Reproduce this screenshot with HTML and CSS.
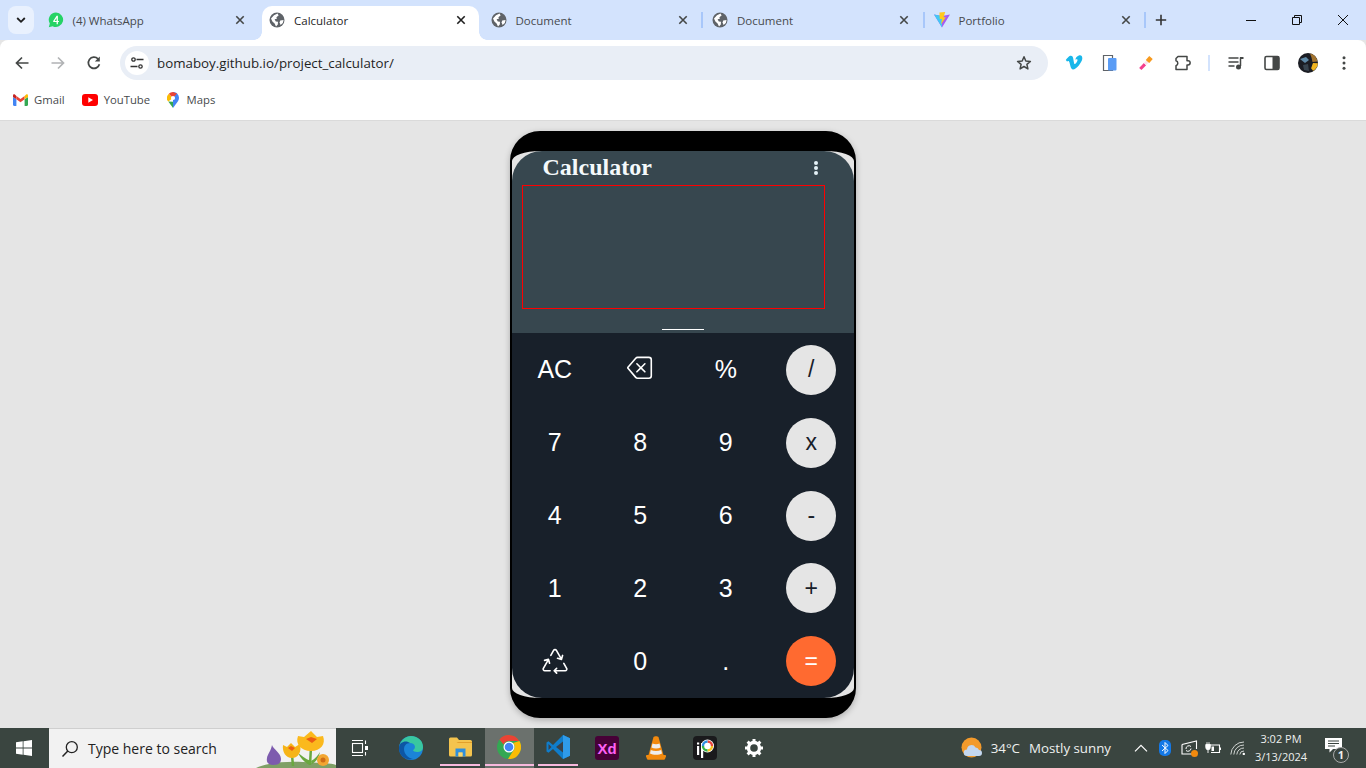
FILE: index.html
```html
<!DOCTYPE html>
<html lang="en">
<head>
  <meta charset="UTF-8" />
  <title>Calculator</title>
  <link rel="stylesheet" href="styles.css">
</head>
<body>
  <svg class="defs" width="0" height="0">
    <defs>
      <symbol id="globe" viewBox="0 0 16 16">
        <circle cx="8" cy="8" r="7.5" fill="#5f6368"/>
        <path d="M2 6.5 5 3.2 8.6 1.6 9.6 3.4 7.4 5.2 7.9 6.8 5.6 7.2 6.8 9.4 9 9.8 8.8 12.4 7 14.4 5.6 11.6 3.4 9.6Z" fill="#fff"/>
        <path d="M11.2 8.4 14.6 8 13.8 11 11.6 13 10.6 10.6Z" fill="#fff"/>
      </symbol>
      <symbol id="cross" viewBox="0 0 16 16">
        <path d="M4.300 4.300 11.700 11.700M11.700 4.300 4.300 11.700" fill="none" stroke="currentColor" stroke-width="1.600"/>
      </symbol>
    </defs>
  </svg>

  <header class="tabstrip">
    <div class="tab-toggle">
      <svg width="12" height="12" viewBox="0 0 12 12"><path d="M2.2 4 6 7.8 9.8 4" fill="none" stroke="#1f1f1f" stroke-width="1.8"/></svg>
    </div>
    <div class="tab">
      <svg class="favicon" viewBox="0 0 16 16"><path d="M8 .6a7.2 7.2 0 0 0-6.2 10.9L.8 15.2l3.8-1A7.2 7.2 0 1 0 8 .6Z" fill="#25d366"/><path d="M8.6 3.8 5.2 9v1h3.4v2.2h1.3V10h1V8.9h-1V3.8Zm0 2.2v2.9H6.7Z" fill="#fff"/></svg>
      <span class="tab-title">(4) WhatsApp</span>
      <svg class="tab-close"><use href="#cross"/></svg>
      <span class="tab-sep tab-sep-off"></span>
    </div>
    <div class="tab tab-active">
      <svg class="favicon"><use href="#globe"/></svg>
      <span class="tab-title">Calculator</span>
      <svg class="tab-close"><use href="#cross"/></svg>
      <span class="tab-sep tab-sep-off"></span>
    </div>
    <div class="tab">
      <svg class="favicon"><use href="#globe"/></svg>
      <span class="tab-title">Document</span>
      <svg class="tab-close"><use href="#cross"/></svg>
      <span class="tab-sep"></span>
    </div>
    <div class="tab">
      <svg class="favicon"><use href="#globe"/></svg>
      <span class="tab-title">Document</span>
      <svg class="tab-close"><use href="#cross"/></svg>
      <span class="tab-sep"></span>
    </div>
    <div class="tab">
      <svg class="favicon" viewBox="0 0 16 16"><path d="M0 2.400 8 4l8-1.600L8 15.600Z" fill="#a55cf2"/><path d="M0 2.400 8 4v11.600Z" fill="#41c8f5"/><path d="M5.400 .6 11.200 0 9.600 5.200h2.200L7 12.400 8 7H5.800Z" fill="#ffc81f"/></svg>
      <span class="tab-title">Portfolio</span>
      <svg class="tab-close"><use href="#cross"/></svg>
      <span class="tab-sep"></span>
    </div>
    <svg class="new-tab" width="12" height="12" viewBox="0 0 12 12"><path d="M6 .8v10.4M.8 6h10.4" stroke="#333" stroke-width="1.6"/></svg>
    <div class="win-controls">
      <svg width="12" height="12" viewBox="0 0 12 12"><path d="M1 6.5h10" stroke="#111" stroke-width="1"/></svg>
      <svg width="12" height="12" viewBox="0 0 12 12"><path d="M1.500 3.500h7v7h-7ZM3.500 3.500V1.500h7v7H8.500" fill="none" stroke="#111" stroke-width="1"/></svg>
      <svg width="12" height="12" viewBox="0 0 12 12"><path d="M1 1 11 11M11 1 1 11" stroke="#111" stroke-width="1"/></svg>
    </div>
  </header>

  <nav class="toolbar">
    <div class="nav-btns">
      <svg width="16" height="16" viewBox="0 0 16 16"><path d="M14.500 8H2.500M8 2.500 2.500 8 8 13.500" fill="none" stroke="#444746" stroke-width="1.700"/></svg>
      <svg width="16" height="16" viewBox="0 0 16 16"><path d="M1.500 8h12M8 2.500 13.500 8 8 13.500" fill="none" stroke="#b1b3b5" stroke-width="1.700"/></svg>
      <svg width="16" height="16" viewBox="0 0 16 16"><path d="M13.400 9.200A5.600 5.600 0 1 1 12 3.900" fill="none" stroke="#444746" stroke-width="1.700"/><path d="M13.800 1.400v5h-5Z" fill="#444746"/></svg>
    </div>
    <div class="omnibox">
      <span class="site-chip">
        <svg width="14" height="14" viewBox="0 0 14 14"><g fill="none" stroke="#333" stroke-width="1.300"><circle cx="3.500" cy="3.500" r="1.700"/><circle cx="10.500" cy="10.500" r="1.700"/><path d="M6.500 3.500h7M.5 10.500h7"/></g></svg>
      </span>
      <span class="url">bomaboy.github.io/project_calculator/</span>
      <svg class="star" width="16" height="16" viewBox="0 0 16 16"><path d="M8 1.800 9.800 6l4.600.4-3.500 3 1 4.500L8 11.500l-3.900 2.400 1-4.500-3.500-3L6.200 6Z" fill="none" stroke="#444746" stroke-width="1.500" stroke-linejoin="round"/></svg>
    </div>
    <div class="ext-icons">
      <svg width="18" height="18" viewBox="0 0 18 18"><path d="M.8 6 2 7.500c1.400-1 2-.8 2.500 1 .8 3 1.400 7 3.500 7 3.500 0 9-7.500 9.300-10.800C17.500 1.800 15.800.8 13.800 1.500 12 2.100 10.800 3.700 10.300 5.800c1.700-.9 2.700-.4 2 1.300-.5 1.200-1.900 3.200-2.600 3C9 9.900 8.700 6.500 8.100 4 7.600 1.700 6.200 1.200 4.600 2.100 3.400 2.900 2 4.400.8 6Z" fill="#19b7ea"/></svg>
      <svg width="18" height="18" viewBox="0 0 18 18"><path d="M2.500 1.500h9v15h-9Z" fill="#fff" stroke="#5f6368" stroke-width="1.200"/><rect x="7" y="4" width="8.500" height="12.500" rx="1" fill="#5a9cf5"/></svg>
      <svg width="18" height="18" viewBox="0 0 18 18"><path d="M3.300 15 8 10.200" stroke="#f43f8e" stroke-width="3.200"/><path d="M8 10.200 11 7" stroke="#fbe3ec" stroke-width="3.200"/><path d="M10.500 7.500 14 3.500" stroke="#f79a1e" stroke-width="4.600"/></svg>
      <svg width="18" height="18" viewBox="0 0 18 18"><path d="M5 2.500h9v4.200h1a2 2 0 0 1 0 4.300h-1v4.500H3V11.600a2.500 2.500 0 0 0 0-4.800V4.500Z" fill="none" stroke="#444746" stroke-width="1.500" stroke-linejoin="round"/></svg>
      <span class="ext-sep"></span>
      <svg width="18" height="18" viewBox="0 0 18 18"><path d="M1.500 4h10M1.500 8h10M1.500 12h6" stroke="#444746" stroke-width="1.500"/><path d="M13.500 3.500V12" stroke="#444746" stroke-width="1.500"/><path d="M13 3h3.500v2H13Z" fill="#444746"/><circle cx="11.500" cy="13" r="2.500" fill="#444746"/></svg>
      <svg width="18" height="18" viewBox="0 0 18 18"><rect x="2" y="2.500" width="14" height="13" rx="1.500" fill="none" stroke="#444746" stroke-width="1.600"/><rect x="9.500" y="2.500" width="6.500" height="13" fill="#444746"/></svg>
      <svg class="avatar" width="20" height="20" viewBox="0 0 20 20"><circle cx="10" cy="10" r="10" fill="#1b1d24"/><path d="M12 .6c4 .8 7 4 7.500 8l-5 .5-1-4.500Z" fill="#a3742f"/><path d="M15 10l4.900.3c-.3 3.500-2 6-4.800 7.500l-2-2.500Z" fill="#f2b51f"/><path d="M2 6l6-2 3 3-4 3Z" fill="#5f8aa8"/><path d="M5 12l5-1 1 7-5-1Z" fill="#38444f"/></svg>
      <svg width="16" height="16" viewBox="0 0 16 16"><g fill="#444746"><circle cx="8" cy="2.800" r="1.500"/><circle cx="8" cy="8" r="1.500"/><circle cx="8" cy="13.200" r="1.500"/></g></svg>
    </div>
  </nav>

  <div class="bookmarks">
    <a class="bookmark">
      <svg width="15" height="12" viewBox="0 0 15 12"><path d="M0 3v7.800C0 11.500.5 12 1.100 12H3.400V5.300Z" fill="#4285f4"/><path d="M11.600 5.300V12h2.300c.6 0 1.100-.5 1.100-1.200V3Z" fill="#34a853"/><path d="M0 1.300V3l3.400 2.300V1.900L1.900.4C1.100-.2 0 .3 0 1.300Z" fill="#c5221f"/><path d="M3.400 1.900v3.400l4.100 3 4.100-3V1.900L7.500 4.900Z" fill="#ea4335"/><path d="M11.600 1.900v3.400L15 3V1.300c0-1-1.100-1.500-1.900-.9Z" fill="#fbbc04"/></svg>
      Gmail
    </a>
    <a class="bookmark">
      <svg width="16" height="12" viewBox="0 0 16 12"><rect width="16" height="12" rx="3" fill="#f00"/><path d="M6.300 3.300v5.400L11 6Z" fill="#fff"/></svg>
      YouTube
    </a>
    <a class="bookmark bookmark-maps">
      <svg width="12" height="16" viewBox="0 0 12 16"><path d="M6 0a6 6 0 0 1 4.800 9.500L6 16Z" fill="#4285f4"/><path d="M1.200 9.500C2.800 11.700 4.500 13.500 6 16V9.800Z" fill="#34a853"/><path d="M1.200 9.500A6 6 0 0 1 1.800 1.700L6 6Z" fill="#fbbc04"/><path d="M1.800 1.700A6 6 0 0 1 6 0l4 1.500L6 6Z" fill="#ea4335"/><circle cx="6" cy="6" r="2.100" fill="#fff"/></svg>
      Maps
    </a>
  </div>

  <main class="page">
    <div class="phone">
      <div class="screen">
        <section class="display">
          <div class="display-head">
            <h1 class="app-title">Calculator</h1>
            <svg class="app-menu" width="4" height="14" viewBox="0 0 4 14"><g fill="#e4f1f7"><circle cx="2" cy="2" r="2"/><circle cx="2" cy="7" r="2"/><circle cx="2" cy="12" r="2"/></g></svg>
          </div>
          <div class="output"></div>
          <div class="handle"></div>
        </section>
        <section class="keypad">
          <button class="key">AC</button>
          <button class="key" aria-label="backspace">
            <svg class="key-back" width="25.6" height="25.6" viewBox="0 0 16 16" fill="currentColor"><path d="M5.830 5.146a.5.5 0 0 0 0 .708L7.975 8l-2.147 2.146a.5.5 0 0 0 .707.708l2.147-2.147 2.146 2.147a.5.5 0 0 0 .707-.708L9.390 8l2.146-2.146a.5.5 0 0 0-.707-.708L8.683 7.293 6.536 5.146a.5.5 0 0 0-.707 0z"/><path d="M13.683 1a2 2 0 0 1 2 2v10a2 2 0 0 1-2 2h-7.080a2 2 0 0 1-1.519-.698L.241 8.650a1 1 0 0 1 0-1.302L5.084 1.700A2 2 0 0 1 6.603 1h7.080zm-7.080 1a1 1 0 0 0-.760.350L1 8l4.844 5.650a1 1 0 0 0 .759.350h7.080a1 1 0 0 0 1-1V3a1 1 0 0 0-1-1h-7.080z"/></svg>
          </button>
          <button class="key">%</button>
          <button class="key key-op">/</button>
          <button class="key">7</button>
          <button class="key">8</button>
          <button class="key">9</button>
          <button class="key key-op">x</button>
          <button class="key">4</button>
          <button class="key">5</button>
          <button class="key">6</button>
          <button class="key key-op">-</button>
          <button class="key">1</button>
          <button class="key">2</button>
          <button class="key">3</button>
          <button class="key key-op">+</button>
          <button class="key" aria-label="recycle">
            <svg class="key-recycle" width="26" height="26" viewBox="0 0 16 16" fill="currentColor"><path d="M9.302 1.256a1.500 1.500 0 0 0-2.604 0l-1.704 2.980a.5.5 0 0 0 .869.497l1.703-2.981a.5.5 0 0 1 .868 0l2.540 4.444-1.256-.337a.5.5 0 1 0-.260.966l2.415.647a.5.5 0 0 0 .613-.353l.647-2.415a.5.5 0 1 0-.966-.259l-.333 1.242-2.532-4.431zM2.973 7.773l-1.255.337a.5.5 0 1 1-.260-.966l2.416-.647a.5.5 0 0 1 .612.353l.647 2.415a.5.5 0 0 1-.966.259l-.333-1.242-2.545 4.454a.5.5 0 0 0 .434.748H5a.5.5 0 0 1 0 1H1.723A1.500 1.500 0 0 1 .421 12.240l2.552-4.467zm10.890 1.463a.5.5 0 1 0-.868.496l1.716 3.004a.5.5 0 0 1-.434.748h-5.570l.647-.646a.5.5 0 1 0-.708-.707l-1.500 1.500a.5.5 0 0 0 0 .707l1.500 1.500a.5.5 0 1 0 .708-.707l-.647-.647h5.570a1.500 1.500 0 0 0 1.302-2.244l-1.716-3.004z"/></svg>
          </button>
          <button class="key">0</button>
          <button class="key">.</button>
          <button class="key key-equal">=</button>
        </section>
      </div>
    </div>
  </main>

  <footer class="taskbar">
    <div class="start">
      <svg width="16" height="16" viewBox="0 0 16 16"><path d="M0 2.300 6.700 1.300V7.600H0ZM7.500 1.200 16 0V7.600H7.500ZM0 8.400H6.700V14.700L0 13.700ZM7.500 8.400H16V16L7.500 14.800Z" fill="#fff"/></svg>
    </div>
    <div class="search">
      <svg width="18" height="18" viewBox="0 0 18 18"><circle cx="10.800" cy="7.200" r="5.500" fill="none" stroke="#222" stroke-width="1.300"/><path d="M6.800 11 1.500 16.500" stroke="#222" stroke-width="1.500"/></svg>
      <span class="search-text">Type here to search</span>
      <svg class="search-art" width="81" height="39" viewBox="0 0 81 39">
        <path d="M1 39C12 34 30 32 48 33s28 1 33 3v3Z" fill="#7fa066"/>
        <path d="M17 16c1 4 9 8 9 14 0 5-4 6-8 6s-7-2-6-7c.5-4 4-7 5-13Z" fill="#7d5bae"/>
        <path d="M38 37 37 26M55 36 56 18" stroke="#6aa83f" stroke-width="2.500" fill="none"/>
        <path d="M56 32C50 30 46 26 43 24 46 30 50 34 55 36ZM56 32c4-2 7-6 9-9-1 5-4 10-8 12Z" fill="#6aa83f"/>
        <path d="M28 16l4 2 4-4 4 4 5-3c2 8-2 14-8 14s-10-6-9-13Z" fill="#f6b417"/>
        <path d="M33 19l3-2 4 2-3 3Z" fill="#ec5f13"/>
        <path d="M43 7l6 1 7-6 6 6 6-1c3 8-2 15-12 15S40 15 43 7Z" fill="#fbb91d"/>
        <path d="M51 10l5-2 6 2-5 4Z" fill="#ec5f13"/>
        <circle cx="68" cy="31" r="6" fill="#f2a531"/><circle cx="68" cy="31" r="2.500" fill="#cf6d16"/>
      </svg>
    </div>
    <div class="task task-view">
      <svg width="18" height="16" viewBox="0 0 18 16"><g fill="none" stroke="#fff" stroke-width="1.100"><path d="M1 .5h11M1 15.500h11"/><rect x="1.500" y="3.500" width="10" height="9"/><path d="M14.500 .5V4M14.500 12v3.500"/></g><rect x="14" y="6" width="3" height="4" fill="#fff"/></svg>
    </div>
    <div class="task">
      <svg width="26" height="26" viewBox="0 0 26 26"><circle cx="13" cy="13" r="12" fill="#1b84d8"/><path d="M1 13C2 5 8 1 13 1c6 0 12 4 12 11 0 4-3 5-6 5-2 0-4-1-4-2 3-1 3-7-3-7C7 8 1 8 1 13Z" fill="#39c7a0"/><path d="M1 13C1 6 9 5 12 8 8 8 6 11 6 14c0 5 4 9 9 10-7 2-14-3-14-11Z" fill="#0d56a4"/></svg>
    </div>
    <div class="task task-open">
      <svg width="23" height="20" viewBox="0 0 23 20"><path d="M0 2a1.500 1.500 0 0 1 1.500-1.500H8L10 3h11.500A1.500 1.500 0 0 1 23 4.500V18a1.500 1.500 0 0 1-1.500 1.500h-20A1.500 1.500 0 0 1 0 18Z" fill="#f4c44e"/><path d="M0 6h23V5H9L7.500 6Z" fill="#e2a02c"/><path d="M6.500 11.500h10V19.500h-3v-4h-4v4h-3Z" fill="#2f8fdc"/><rect x="9.500" y="15.500" width="4" height="4" fill="#f9d873"/></svg>
    </div>
    <div class="task task-open task-active">
      <svg width="24" height="24" viewBox="0 0 24 24"><circle cx="12" cy="12" r="12" fill="#34a853"/><path d="M12 0a12 12 0 0 1 10.400 6H12a6 6 0 0 0-5.500 3.600L2.400 4.400A12 12 0 0 1 12 0Z" fill="#ea4335"/><path d="M22.400 6A12 12 0 0 1 11 24l5.200-8.200A6 6 0 0 0 16 8l6.400-2Z" fill="#fbbc04"/><circle cx="12" cy="12" r="5.500" fill="#fff"/><circle cx="12" cy="12" r="4.300" fill="#4285f4"/></svg>
    </div>
    <div class="task task-open">
      <svg width="24" height="24" viewBox="0 0 24 24"><path d="M17 0 24 3.200V20.800L17 24 7 14 2.500 17.700.5 16.500V7.500L2.500 6.300 7 10Z" fill="#0f7dcb"/><path d="M17 0 24 3.200V20.800L17 24Z" fill="#2f9bea"/><path d="M17 6.500 10 12l7 5.500Z" fill="#39424a"/><path d="M2.500 9 5.500 12 2.500 15Z" fill="#39424a"/></svg>
    </div>
    <div class="task">
      <div class="xd-logo">Xd</div>
    </div>
    <div class="task">
      <svg width="20" height="24" viewBox="0 0 20 24"><path d="M7.500 1c1-1 4-1 5 0l5 18H2.500Z" fill="#f28a0e"/><path d="M6.500 7.500c2 1 5 1 7 0l1 4c-2.500 1.300-6.500 1.300-9 0ZM4.800 14c3 1.400 7.400 1.400 10.400 0l.8 3.400c-3 1.700-9 1.700-12 0Z" fill="#eee"/><path d="M1 19h18c.6 0 1 .5 1 1.200L19 23c-.2.500-.5.700-1 .7H2c-.5 0-.8-.2-1-.7L0 20.200C0 19.500.4 19 1 19Z" fill="#f28a0e"/></svg>
    </div>
    <div class="task">
      <svg width="24" height="24" viewBox="0 0 24 24"><rect width="24" height="24" rx="4" fill="#1a1a1c"/><rect x="4" y="10" width="2.200" height="9" fill="#fff"/><rect x="4" y="6.500" width="2.200" height="2" fill="#fff"/><rect x="8" y="7" width="2.200" height="15" fill="#fff"/><circle cx="14.500" cy="10" r="6.500" fill="#fff"/><g fill="none" stroke-width="2.400"><path d="M14.500 5.500a4.500 4.500 0 0 1 4.500 4.500" stroke="#e8463c"/><path d="M19 10a4.500 4.500 0 0 1-4.500 4.500" stroke="#f6c01d"/><path d="M14.500 14.500A4.500 4.500 0 0 1 10 10" stroke="#35b34a"/><path d="M10 10a4.500 4.500 0 0 1 4.500-4.500" stroke="#2d8fe0"/></g></svg>
    </div>
    <div class="task">
      <svg width="20" height="20" viewBox="0 0 20 20"><circle cx="10" cy="10" r="5.500" fill="none" stroke="#fff" stroke-width="3.400"/><path d="M10 1v3M10 16v3M1 10h3M16 10h3M3.600 3.600l2.200 2.200M14.200 14.200l2.200 2.200M3.600 16.400l2.200-2.200M14.200 5.800l2.200-2.200" stroke="#fff" stroke-width="3"/></svg>
    </div>

    <div class="tray">
      <svg class="tray-weather" width="22" height="22" viewBox="0 0 22 22"><circle cx="10.500" cy="10.500" r="10" fill="#f39a2b"/><path d="M6 19a3 3 0 0 1 0-6.500A4.500 4.500 0 0 1 14.500 10.500 3.500 3.500 0 0 1 18 13a3 3 0 0 1 3 3 3 3 0 0 1-3 3Z" fill="#c3d6ef"/></svg>
      <span class="tray-temp">34°C</span>
      <span class="tray-sky">Mostly sunny</span>
      <svg class="tray-chevron" width="14" height="8" viewBox="0 0 14 8"><path d="M1 7.300 7 1.300l6 6" fill="none" stroke="#fff" stroke-width="1.200"/></svg>
      <svg class="tray-bt" width="12" height="16" viewBox="0 0 12 16"><rect width="12" height="16" rx="5" fill="#1478e6"/><path d="M3 5 9 10.500 6 13.500V2.500L9 5.500 3 11" fill="none" stroke="#fff" stroke-width="1"/></svg>
      <svg class="tray-sync" width="17" height="17" viewBox="0 0 17 17"><path d="M1 4.500 15.500 1V9M11 14H1V4.500" fill="none" stroke="#fff" stroke-width="1.100"/><path d="M5 9a3 3 0 0 1 5-2.500M10 8.500a3 3 0 0 1-5 2" fill="none" stroke="#fff" stroke-width="1"/><circle cx="13.500" cy="13.500" r="3.500" fill="#f28a0e"/></svg>
      <svg class="tray-power" width="16" height="12" viewBox="0 0 16 12"><path d="M5 3h9.500v7.500H6" fill="none" stroke="#fff" stroke-width="1.100"/><path d="M14.500 5.500H16v2.500h-1.500Z" fill="#fff"/><path d="M.8 2.500h4.500v3a2 2 0 0 1-4.500 0ZM2 .2v2.300M4 .2v2.300M3 7.500v3.500" fill="#fff" stroke="#fff" stroke-width=".9"/><rect x="6.500" y="4.500" width="2.500" height="4.500" fill="#fff"/></svg>
      <svg class="tray-wifi" width="16" height="14" viewBox="0 0 16 14"><g fill="none" stroke="#cfd3d1" stroke-width="1"><path d="M.8 13.500A13 13 0 0 1 14 1"/><path d="M3.800 13.500A10 10 0 0 1 14 4"/><path d="M6.800 13.500A7 7 0 0 1 14 7"/><path d="M9.800 13.500A4 4 0 0 1 14 10"/></g><circle cx="13.800" cy="13" r="1.200" fill="#fff"/></svg>
      <div class="clock">
        <span>3:02 PM</span>
        <span>3/13/2024</span>
      </div>
      <div class="notify">
        <svg width="17" height="15" viewBox="0 0 17 15"><path d="M0 0h17v11H8l-3.500 3.500V11H0Z" fill="#fff"/><path d="M3 3h11M3 5.500h11M3 8h7" stroke="#39433e" stroke-width="1"/></svg>
        <span class="notify-count">1</span>
      </div>
    </div>
  </footer>
</body>
</html>
```

FILE: styles.css
```css
* {
  box-sizing: border-box;
}

html, body {
  margin: 0;
  height: 100%;
}

body {
  display: flex;
  flex-direction: column;
  height: 768px;
  overflow: hidden;
  font-family: "Open Sans", "Noto Sans", sans-serif;
  background: #e5e5e5;
}

.defs {
  position: absolute;
}

/* browser tabs */
.tabstrip {
  display: flex;
  flex: 0 0 40px;
  padding-left: 8px;
  background: #d3e3fd;
}

.tab-toggle {
  display: flex;
  align-items: center;
  justify-content: center;
  width: 26px;
  height: 28px;
  margin: 6px 6.5px 0 0;
  border-radius: 8px;
  background: #e9f1fe;
}

.tab {
  position: relative;
  display: flex;
  align-items: center;
  width: 221.5px;
  height: 34px;
  margin-top: 6px;
  padding: 0 0 6px 7px;
  border-radius: 10px 10px 0 0;
  color: #474a4d;
}

.tab-active {
  width: 217px;
  margin-right: 4.5px;
  background: #fff;
  color: #1f1f1f;
}

.tab-active .tab-sep {
  margin-right: -2.5px;
}

/* the curved feet of the open tab */
.tab-active::before,
.tab-active::after {
  content: "";
  position: absolute;
  bottom: 0;
  width: 8px;
  height: 8px;
}

.tab-active::before {
  left: -8px;
  background: radial-gradient(circle at 0 0, transparent 7.5px, #fff 8px);
}

.tab-active::after {
  right: -8px;
  background: radial-gradient(circle at 100% 0, transparent 7.5px, #fff 8px);
}

.favicon {
  flex: 0 0 16px;
  width: 16px;
  height: 16px;
  margin-right: 9px;
}

.tab-title {
  flex: 1;
  font-size: 11.5px;
  white-space: nowrap;
}

.tab-close {
  flex: 0 0 16px;
  width: 16px;
  height: 16px;
  color: #444746;
}

.tab-active .tab-close {
  color: #1f1f1f;
}

.tab-sep {
  flex: 0 0 2px;
  height: 16px;
  margin: 0 2px 0 10.5px;
  background: #a8c7fa;
}

.tab-sep-off {
  background: none;
}

.new-tab {
  margin: 14px 0 0 7px;
}

.win-controls {
  display: flex;
  align-items: center;
  gap: 34px;
  margin-left: auto;
  padding-right: 17px;
}

/* address bar */
.toolbar {
  display: flex;
  flex: 0 0 40px;
  align-items: flex-start;
  padding: 6px 0 0 14px;
  border-radius: 8px 8px 0 0;
  background: #fff;
}

.nav-btns {
  display: flex;
  gap: 20px;
  height: 34px;
  align-items: center;
}

.omnibox {
  display: flex;
  align-items: center;
  width: 928px;
  height: 34px;
  margin-left: 18px;
  padding: 0 16px 0 5px;
  border-radius: 17px;
  background: #e9eef6;
}

.site-chip {
  display: flex;
  align-items: center;
  justify-content: center;
  width: 24px;
  height: 24px;
  margin-right: 8px;
  border-radius: 50%;
  background: #fff;
}

.url {
  flex: 1;
  font-size: 13.33px;
  color: #1f1f1f;
}

.ext-icons {
  display: flex;
  align-items: center;
  height: 34px;
  margin-left: 17px;
  gap: 18px;
}

.ext-sep {
  width: 2px;
  height: 16px;
  margin: 0 -1px;
  background: #d3e3fd;
}

.avatar {
  margin-left: -1px;
}

.bookmarks {
  display: flex;
  flex: 0 0 41px;
  align-items: center;
  padding: 0 0 1px 13px;
  gap: 17px;
  border-bottom: 1px solid #dadada;
  background: #fff;
}

.bookmark {
  display: flex;
  align-items: center;
  gap: 6px;
  font-size: 11.3px;
  color: #474a4d;
}

.bookmark-maps {
  gap: 7.5px;
}

/* the calculator itself */
.page {
  display: flex;
  flex: 1;
  align-items: center;
  justify-content: center;
}

.phone {
  width: 346px;
  height: 587px;
  border: solid #000;
  border-width: 20px 2px;
  border-radius: 30px;
  background: #e4e4e4;
  box-shadow: 0 2px 6px rgba(0, 0, 0, 0.25);
}

.screen {
  display: flex;
  flex-direction: column;
  height: 100%;
  border-radius: 30px;
  overflow: hidden;
}

.display {
  height: 182px;
  background: #37474f;
}

.display-head {
  display: flex;
  align-items: center;
  justify-content: space-between;
  height: 34px;
  padding: 0 36px 2px 30.5px;
}

.app-menu {
  margin-top: 2px;
}

.app-title {
  margin: 0;
  font-family: "Liberation Serif", serif;
  font-size: 24px;
  font-weight: bold;
  color: #f4f9fb;
}

.output {
  width: 303px;
  height: 124px;
  margin-left: 10px;
  border: 1px solid #f00;
}

.handle {
  width: 42px;
  height: 1px;
  margin: 20px auto 0;
  background: #fff;
}

.keypad {
  display: grid;
  flex: 1;
  grid-template-columns: repeat(4, 1fr);
  grid-template-rows: repeat(5, 1fr);
  place-items: center;
  padding: 0.3px 0 0.2px;
  background: #18202a;
}

.key {
  display: flex;
  align-items: center;
  justify-content: center;
  width: 50px;
  height: 50px;
  padding: 0;
  border: none;
  border-radius: 50%;
  background: none;
  font-family: "Liberation Sans", Arial, sans-serif;
  font-size: 25px;
  color: #fff;
}

.key-back {
  margin-bottom: 3px;
}

.key-recycle {
  margin-bottom: 1px;
}

.key-op {
  background: #e5e5e5;
  font-size: 23px;
  color: #18202a;
}

.key-equal {
  background: #ff6a30;
  font-size: 23px;
}

/* windows taskbar */
.taskbar {
  display: flex;
  flex: 0 0 40px;
  background: #3a4540;
  color: #fff;
}

.start {
  display: flex;
  flex: 0 0 49px;
  align-items: center;
  justify-content: center;
  padding-right: 1px;
}

.search {
  position: relative;
  display: flex;
  flex: 0 0 287px;
  align-items: center;
  padding-left: 12px;
  border-top: 1px solid #cfcfcf;
  background: #f2f2f2;
}

.search-text {
  margin-left: 9px;
  font-size: 14px;
  color: #222;
}

.search-art {
  position: absolute;
  right: 0;
  bottom: 0;
}

.task {
  display: flex;
  flex: 0 0 49px;
  align-items: center;
  justify-content: center;
  height: 40px;
}

.task-view {
  flex-basis: 50.5px;
  padding-right: 3px;
}

.task-open {
  border-bottom: 2px solid transparent;
  background: linear-gradient(#f7b8dd, #f7b8dd) center bottom / 40px 2px no-repeat;
}

.task-active {
  background: linear-gradient(#f7b8dd, #f7b8dd) center bottom / 100% 2px no-repeat, #6b716d;
}

.xd-logo {
  display: flex;
  align-items: center;
  justify-content: center;
  width: 24px;
  height: 24px;
  border-radius: 3px;
  background: #470137;
  font-family: "Liberation Sans", sans-serif;
  font-size: 15px;
  font-weight: bold;
  color: #ff61f6;
}

.tray {
  display: flex;
  align-items: center;
  margin-left: auto;
  font-size: 13.3px;
  color: #eef0ef;
}

.tray-temp {
  margin-left: 8px;
}

.tray-sky {
  width: 82px;
  margin-left: 9px;
  white-space: nowrap;
}

.tray-chevron {
  margin-left: 23px;
}

.tray-bt {
  margin-left: 11px;
}

.tray-sync {
  margin-left: 10px;
}

.tray-power {
  margin-left: 7px;
}

.tray-wifi {
  margin-left: 9px;
}

.clock {
  display: flex;
  flex-direction: column;
  align-items: center;
  width: 48px;
  margin-left: 11px;
  font-size: 11px;
  line-height: 18px;
  white-space: nowrap;
}

.notify {
  position: relative;
  display: flex;
  align-items: center;
  justify-content: center;
  width: 61px;
  height: 40px;
  padding: 0 4px 6px 0;
}

.notify-count {
  position: absolute;
  right: 17px;
  bottom: 5px;
  width: 16px;
  height: 16px;
  border: 1px solid #aaa;
  border-radius: 50%;
  background: #3a4540;
  font-size: 11px;
  font-weight: bold;
  line-height: 14px;
  text-align: center;
}
```
